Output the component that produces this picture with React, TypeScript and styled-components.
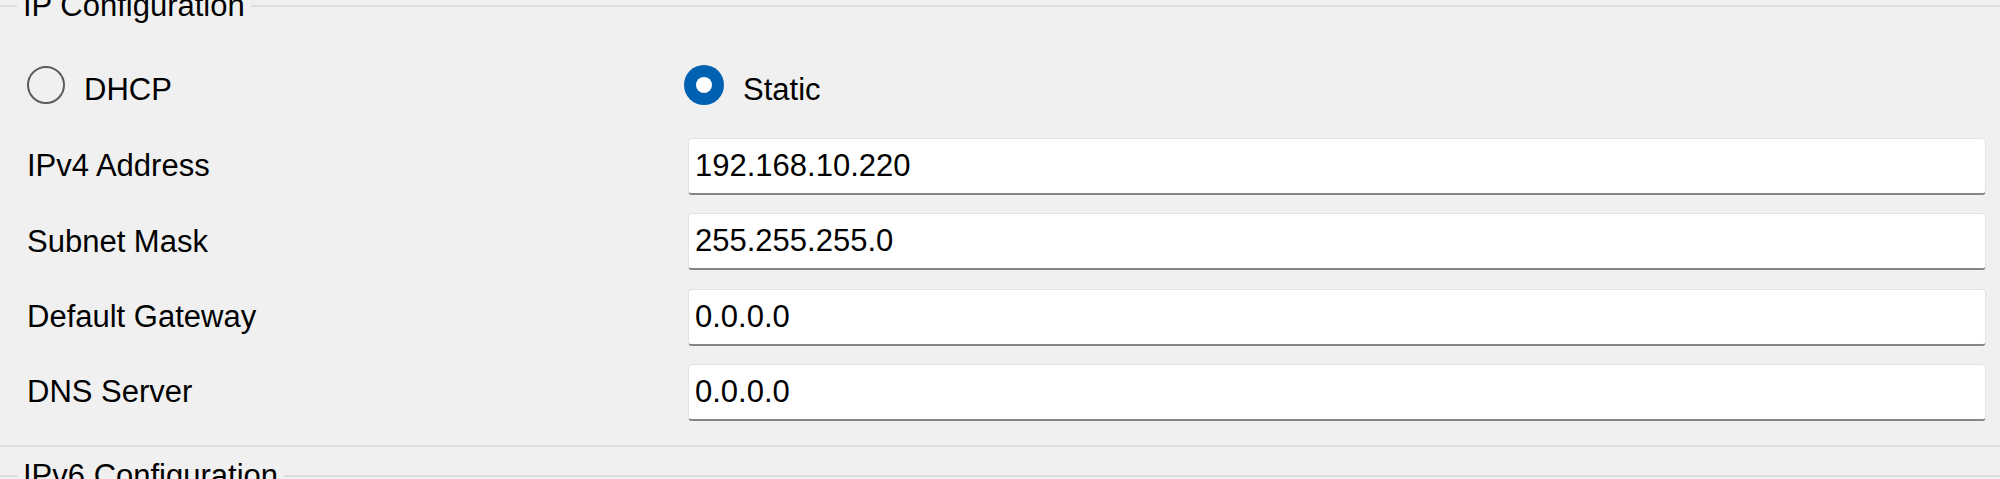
import React from "react";
import styled, { createGlobalStyle } from "styled-components";

const Global = createGlobalStyle`
  html, body {
    margin: 0;
    padding: 0;
    overflow: hidden;
    background: #f0f0f0;
  }
  body {
    font-family: "Liberation Sans", Arial, sans-serif;
    color: #000;
  }
`;

const Page = styled.div`
  width: 2000px;
  height: 479px;
  overflow: hidden;
  background: #f0f0f0;
  padding-top: 1px;
  box-sizing: border-box;
`;

const Group = styled.fieldset`
  margin: -13px -10px 0;
  padding: 0;
  border: 2px solid #dcdcdc;
  min-width: 0;
  & + & {
    margin-top: 11px;
  }
`;

const Legend = styled.legend`
  margin-left: 25px;
  padding: 0 6px;
  font-size: 31px;
  line-height: 36px;
`;

const Body = styled.div<{ $tall?: boolean }>`
  display: grid;
  grid-template-columns: 659px 1300px;
  row-gap: 18.33px;
  padding: 41px 0 24px 35px;
  min-height: ${(p) => (p.$tall ? "200px" : "0")};
`;

const RadioItem = styled.label`
  display: flex;
  align-items: center;
  gap: 19px;
  height: 40px;
  margin-bottom: 14.67px;
  font-size: 31px;
  cursor: default;
`;

const RadioText = styled.span`
  padding-top: 9px;
  line-height: 36px;
`;

const RadioMark = styled.span<{ $checked?: boolean }>`
  box-sizing: border-box;
  flex: none;
  border-radius: 50%;
  width: ${(p) => (p.$checked ? "40px" : "38px")};
  height: ${(p) => (p.$checked ? "40px" : "38px")};
  margin-left: ${(p) => (p.$checked ? "-2px" : "0")};
  background: ${(p) => (p.$checked ? "#0061b3" : "transparent")};
  border: ${(p) => (p.$checked ? "none" : "2px solid #5c5c5c")};
  display: flex;
  align-items: center;
  justify-content: center;
  &::after {
    content: "";
    display: ${(p) => (p.$checked ? "block" : "none")};
    width: 16px;
    height: 16px;
    border-radius: 50%;
    background: #fff;
  }
`;

const Label = styled.div`
  align-self: center;
  font-size: 31px;
  line-height: 36px;
`;

const Field = styled.input`
  box-sizing: border-box;
  height: 57px;
  width: 1298px;
  margin: 0 0 0 2px;
  border: 1px solid #e3e3e3;
  border-bottom: 2px solid #858585;
  border-radius: 4px;
  background: #fff;
  padding: 0 6px;
  font-family: "Liberation Sans", Arial, sans-serif;
  font-size: 31px;
  color: #000;
  outline: none;
`;

const rows: [string, string][] = [
  ["IPv4 Address", "192.168.10.220"],
  ["Subnet Mask", "255.255.255.0"],
  ["Default Gateway", "0.0.0.0"],
  ["DNS Server", "0.0.0.0"],
];

export default function App() {
  return (
    <>
      <Global />
      <Page>
        <Group>
          <Legend>IP Configuration</Legend>
          <Body>
            <RadioItem>
              <RadioMark />
              <RadioText>DHCP</RadioText>
            </RadioItem>
            <RadioItem>
              <RadioMark $checked />
              <RadioText>Static</RadioText>
            </RadioItem>
            {rows.map(([label, value]) => (
              <React.Fragment key={label}>
                <Label>{label}</Label>
                <Field defaultValue={value} readOnly />
              </React.Fragment>
            ))}
          </Body>
        </Group>
        <Group>
          <Legend>IPv6 Configuration</Legend>
          <Body $tall />
        </Group>
      </Page>
    </>
  );
}
